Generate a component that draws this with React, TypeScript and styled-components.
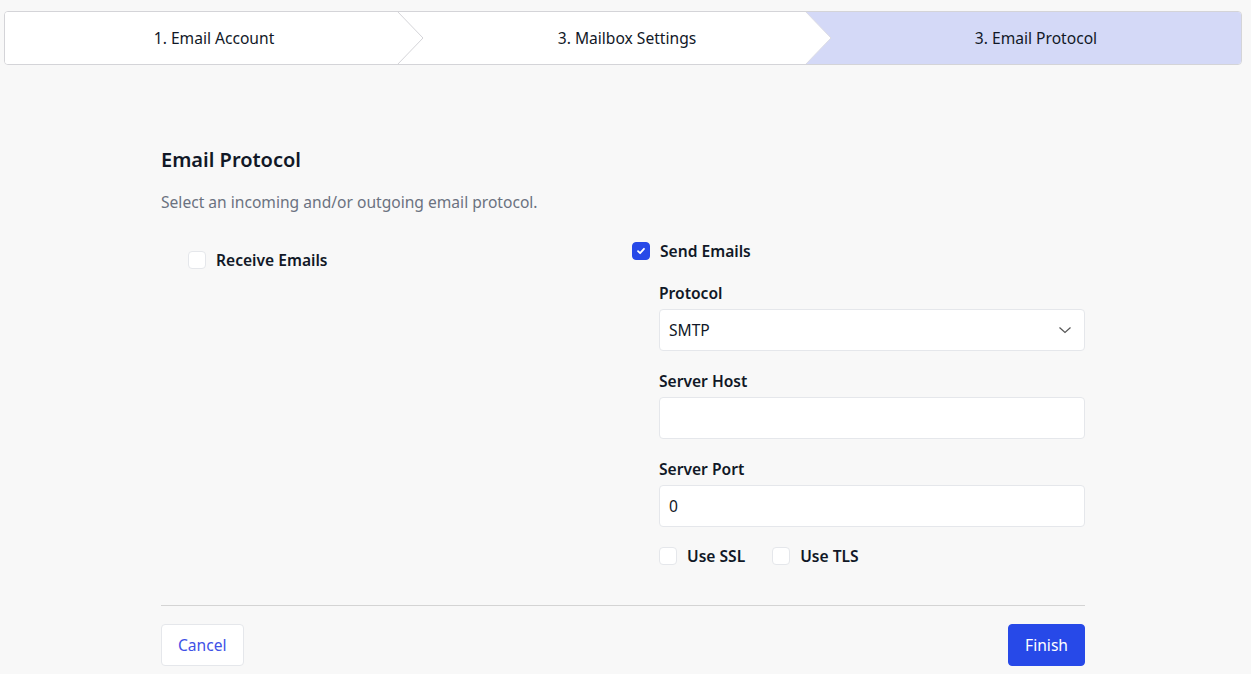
import React from "react";
import styled, { createGlobalStyle } from "styled-components";

const Global = createGlobalStyle`
  html, body { margin: 0; padding: 0; background: #f8f8f8; }
  body { font-family: "Noto Sans", "Open Sans", sans-serif; color: #111827; }
  * { box-sizing: border-box; }
`;

const Page = styled.div`
  min-height: 674px;
  padding: 11px 9px 0 4px;
`;

const Stepper = styled.nav`
  display: grid;
  grid-template-columns: 418px 408px 1fr;
  height: 54px;
  border: 1px solid #d4d4d8;
  border-radius: 4px;
  background: #ffffff;
  overflow: hidden;
`;

const Step = styled.div<{ $active?: boolean }>`
  position: relative;
  display: flex;
  align-items: center;
  justify-content: center;
  background: ${(p) => (p.$active ? "#d4d9f7" : "#ffffff")};
  font-size: 15.6px;
  color: #111827;
`;

const StepLabel = styled.span`
  position: relative;
  z-index: 1;
`;

const Arrow = styled.svg`
  position: absolute;
  right: 0;
  top: 0;
  width: 26px;
  height: 100%;
`;

const Content = styled.main`
  width: 924px;
  margin: 0 0 0 157px;
  padding-top: 81px;
`;

const Title = styled.h2`
  margin: 0;
  font-size: 20px;
  line-height: 28px;
  font-weight: 600;
  color: #111827;
`;

const Subtitle = styled.p`
  margin: 17px 0 0;
  font-size: 15.6px;
  line-height: 22px;
  color: #6b7280;
`;

const Columns = styled.div`
  display: grid;
  grid-template-columns: 471px 1fr;
  margin-top: 27px;
`;

const LeftCol = styled.div`
  padding: 9px 0 0 27px;
`;

const RightCol = styled.div`
  display: flex;
  flex-direction: column;
`;

const CheckRow = styled.label`
  display: inline-flex;
  align-items: center;
  gap: 10px;
  height: 22px;
  font-size: 15.6px;
  font-weight: 600;
  color: #111827;
`;

const Box = styled.span<{ $checked?: boolean }>`
  width: 18px;
  height: 18px;
  border-radius: 4px;
  border: 1px solid ${(p) => (p.$checked ? "#2749e8" : "#e5e7eb")};
  background: ${(p) => (p.$checked ? "#2749e8" : "#ffffff")};
  display: inline-flex;
  align-items: center;
  justify-content: center;
  flex: none;
`;

const Fields = styled.div`
  display: flex;
  flex-direction: column;
  padding-left: 27px;
`;

const Field = styled.div`
  display: flex;
  flex-direction: column;
  gap: 5px;
  margin-top: 19px;
  &:first-child {
    margin-top: 20px;
  }
`;

const Label = styled.span`
  font-size: 15.6px;
  line-height: 22px;
  font-weight: 600;
  color: #111827;
`;

const InputBox = styled.div`
  position: relative;
  height: 42px;
  background: #ffffff;
  border: 1px solid #e5e7eb;
  border-radius: 4px;
  display: flex;
  align-items: center;
  padding: 0 9px;
  font-size: 15.6px;
  color: #111827;
`;

const Chevron = styled.svg`
  position: absolute;
  right: 12px;
  top: 50%;
  margin-top: -6px;
  width: 14px;
  height: 12px;
`;

const Options = styled.div`
  display: flex;
  gap: 27px;
  margin-top: 18px;
`;

const Divider = styled.hr`
  margin: 38px 0 0;
  border: none;
  border-top: 1px solid #d4d4d4;
`;

const Footer = styled.div`
  display: flex;
  justify-content: space-between;
  margin-top: 18px;
`;

const Button = styled.button<{ $primary?: boolean }>`
  height: 42px;
  padding: 0 16px;
  border-radius: 4px;
  font-family: inherit;
  font-size: 15.6px;
  border: 1px solid ${(p) => (p.$primary ? "#2749e8" : "#e5e7eb")};
  background: ${(p) => (p.$primary ? "#2749e8" : "#ffffff")};
  color: ${(p) => (p.$primary ? "#ffffff" : "#3f51e6")};
  cursor: pointer;
`;

const Check = ({ checked }: { checked?: boolean }) => (
  <Box $checked={checked}>
    {checked && (
      <svg width="10" height="10" viewBox="0 0 10 10">
        <path d="M2 5.2 L4.1 7.2 L8 2.8" fill="none" stroke="#fff" strokeWidth="1.8" strokeLinecap="round" strokeLinejoin="round" />
      </svg>
    )}
  </Box>
);

export default function App() {
  return (
    <>
      <Global />
      <Page>
        <Stepper>
          <Step>
            <StepLabel>1. Email Account</StepLabel>
            <Arrow viewBox="0 0 26 52" preserveAspectRatio="none">
              <polyline points="0,-1 26,26 0,53" fill="none" stroke="#d4d4d8" strokeWidth="1" />
            </Arrow>
          </Step>
          <Step>
            <StepLabel>3. Mailbox Settings</StepLabel>
            <Arrow viewBox="0 0 26 52" preserveAspectRatio="none">
              <rect x="0" y="0" width="26" height="52" fill="#d4d9f7" />
              <polygon points="0,-1 26,26 0,53" fill="#ffffff" />
              <polyline points="0,-1 26,26 0,53" fill="none" stroke="#dcdce4" strokeWidth="1" />
            </Arrow>
          </Step>
          <Step $active>
            <StepLabel>3. Email Protocol</StepLabel>
          </Step>
        </Stepper>

        <Content>
          <Title>Email Protocol</Title>
          <Subtitle>Select an incoming and/or outgoing email protocol.</Subtitle>
          <Columns>
            <LeftCol>
              <CheckRow>
                <Check />
                Receive Emails
              </CheckRow>
            </LeftCol>
            <RightCol>
              <CheckRow>
                <Check checked />
                Send Emails
              </CheckRow>
              <Fields>
                <Field>
                  <Label>Protocol</Label>
                  <InputBox>
                    SMTP
                    <Chevron viewBox="0 0 14 12">
                      <path d="M1.5 3.5 L7 8.5 L12.5 3.5" fill="none" stroke="#555" strokeWidth="1.2" />
                    </Chevron>
                  </InputBox>
                </Field>
                <Field>
                  <Label>Server Host</Label>
                  <InputBox />
                </Field>
                <Field>
                  <Label>Server Port</Label>
                  <InputBox>0</InputBox>
                </Field>
                <Options>
                  <CheckRow>
                    <Check />
                    Use SSL
                  </CheckRow>
                  <CheckRow>
                    <Check />
                    Use TLS
                  </CheckRow>
                </Options>
              </Fields>
            </RightCol>
          </Columns>
          <Divider />
          <Footer>
            <Button>Cancel</Button>
            <Button $primary>Finish</Button>
          </Footer>
        </Content>
      </Page>
    </>
  );
}
